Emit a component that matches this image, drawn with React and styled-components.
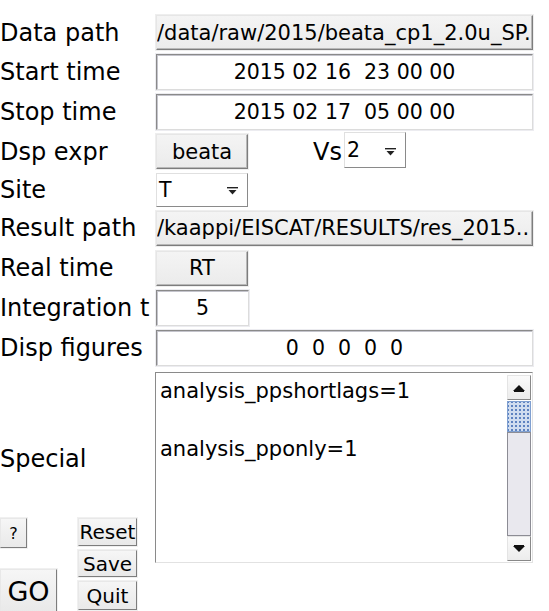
import React from "react";
import styled, { createGlobalStyle } from "styled-components";

const GlobalStyle = createGlobalStyle`
    html, body {
        margin: 0;
        padding: 0;
        background: #ffffff;
    }
    body {
        font-family: "DejaVu Sans", "Liberation Sans", sans-serif;
        color: #000;
    }
`;

const rows = [39, 40, 40, 39, 37, 40, 40, 40, 40];

export default function App() {
    return <>
        <GlobalStyle />
        <Window>
            <Form>
                <Label>Data path</Label>
                <Field><RaisedBox $width={377} $align="left">/data/raw/2015/beata_cp1_2.0u_SP.</RaisedBox></Field>

                <Label>Start time</Label>
                <Field><Entry $width={377}>2015 02 16&nbsp;&nbsp;23 00 00</Entry></Field>

                <Label>Stop time</Label>
                <Field><Entry $width={377}>2015 02 17&nbsp;&nbsp;05 00 00</Entry></Field>

                <Label>Dsp expr</Label>
                <Field>
                    <RaisedBox $width={92}>beata</RaisedBox>
                    <InlineLabel>Vs</InlineLabel>
                    <OptionMenu $width={62} $tall>2<MenuArrow /></OptionMenu>
                </Field>

                <Label>Site</Label>
                <Field><OptionMenu $width={92}>T<MenuArrow /></OptionMenu></Field>

                <Label>Result path</Label>
                <Field><RaisedBox $width={377} $align="left">/kaappi/EISCAT/RESULTS/res_2015..</RaisedBox></Field>

                <Label>Real time</Label>
                <Field><RaisedBox $width={92}>RT</RaisedBox></Field>

                <Label>Integration t</Label>
                <Field><Entry $width={93}>5</Entry></Field>

                <Label>Disp figures</Label>
                <Field><Entry $width={377}>0&nbsp;&nbsp;0&nbsp;&nbsp;0&nbsp;&nbsp;0&nbsp;&nbsp;0</Entry></Field>
            </Form>

            <Bottom>
                <LeftColumn>
                    <SpecialLabel>Special</SpecialLabel>
                    <Cluster>
                        <ClusterCol>
                            <SmallButton $w={27} $h={30} $size={16}>?</SmallButton>
                            <SmallButton $w={57} $h={44} $size={27}>GO</SmallButton>
                        </ClusterCol>
                        <ClusterCol $gap={4}>
                            <SmallButton $w={59} $h={28} $size={20}>Reset</SmallButton>
                            <SmallButton $w={59} $h={27} $size={20}>Save</SmallButton>
                            <SmallButton $w={59} $h={29} $size={20}>Quit</SmallButton>
                        </ClusterCol>
                    </Cluster>
                </LeftColumn>
                <TextPane>
                    <TextBody>{"analysis_ppshortlags=1\n\nanalysis_pponly=1"}</TextBody>
                    <ScrollBar>
                        <ArrowButton><Tri $up /></ArrowButton>
                        <Thumb />
                        <Trough />
                        <ArrowButton><Tri /></ArrowButton>
                    </ScrollBar>
                </TextPane>
            </Bottom>
        </Window>
    </>;
}

function MenuArrow() {
    return (
        <ArrowIcon width="11" height="8" viewBox="0 0 11 8">
            <rect x="0" y="0" width="11" height="1.4" fill="#222" />
            <path d="M1.5 3 L9.5 3 L5.5 7.5 Z" fill="#222" />
        </ArrowIcon>
    );
}

const Window = styled.div`
    width: 549px;
    height: 611px;
    overflow: hidden;
    padding-top: 13px;
    box-sizing: border-box;
`;

const Form = styled.div`
    display: grid;
    grid-template-columns: 155px 1fr;
    grid-template-rows: ${rows.map(r => `${r}px`).join(" ")};
`;

const Label = styled.div`
    font-size: 24px;
    line-height: 28px;
    align-self: center;
    white-space: nowrap;
    overflow: hidden;
`;

const Field = styled.div`
    display: flex;
    align-items: center;
    padding-left: 1px;
`;

const RaisedBox = styled.div`
    width: ${p => p.$width}px;
    height: 35px;
    box-sizing: border-box;
    background: linear-gradient(#f4f4f4, #ebebeb);
    border: 1px solid;
    border-color: #e6e6e6 #7d7d7d #7d7d7d #e6e6e6;
    box-shadow: inset -1px -1px 0 #b8b8b8, 0 0 0 1px #eeeeee;
    font-size: 21px;
    display: flex;
    align-items: center;
    justify-content: ${p => p.$align === "left" ? "flex-start" : "center"};
    white-space: nowrap;
    overflow: hidden;
`;

const Entry = styled.div`
    width: ${p => p.$width}px;
    height: 36px;
    box-sizing: border-box;
    background: #ffffff;
    border: 1px solid;
    border-color: #8a8a8a #dcdcdc #dcdcdc #8a8a8a;
    box-shadow: inset 1px 1px 0 #c4c4cc, 0 0 0 1px #ececf0;
    font-size: 20.5px;
    display: flex;
    align-items: center;
    justify-content: center;
    white-space: nowrap;
`;

const InlineLabel = styled.span`
    font-size: 24px;
    margin-left: 65px;
    margin-right: 2px;
`;

const OptionMenu = styled.div`
    width: ${p => p.$width}px;
    height: ${p => p.$tall ? 36 : 34}px;
    margin-top: ${p => p.$tall ? -3 : 0}px;
    box-sizing: border-box;
    background: #ffffff;
    border: 1px solid;
    border-color: #e0e0e0 #8a8a8a #8a8a8a #e0e0e0;
    font-size: 20.5px;
    display: flex;
    align-items: center;
    justify-content: space-between;
    padding: 0 9px 0 2px;
`;

const ArrowIcon = styled.svg`
    display: block;
    margin-top: 3px;
`;

const Bottom = styled.div`
    display: flex;
    align-items: flex-start;
    padding-top: 4px;
`;

const LeftColumn = styled.div`
    width: 155px;
    display: flex;
    flex-direction: column;
`;

const SpecialLabel = styled.div`
    font-size: 24px;
    line-height: 30px;
    margin-top: 72px;
`;

const Cluster = styled.div`
    margin-top: 44px;
    display: flex;
    align-items: flex-start;
    height: 95px;
`;

const ClusterCol = styled.div`
    width: ${p => p.$gap ? "60px" : "78px"};
    height: 100%;
    display: flex;
    flex-direction: column;
    justify-content: ${p => p.$gap ? "flex-start" : "space-between"};
    gap: ${p => p.$gap || 0}px;
`;

const SmallButton = styled.div`
    width: ${p => p.$w}px;
    height: ${p => p.$h}px;
    box-sizing: border-box;
    background: linear-gradient(#f6f6f6, #e9e9e9);
    border: 1px solid;
    border-color: #e8e8e8 #7d7d7d #7d7d7d #e8e8e8;
    box-shadow: 0 0 0 1px #f0f0f0;
    font-size: ${p => p.$size}px;
    display: flex;
    align-items: center;
    justify-content: center;
    white-space: nowrap;
    overflow: visible;
`;

const TextPane = styled.div`
    width: 378px;
    height: 191px;
    box-sizing: border-box;
    border: 1px solid;
    border-color: #8a8a8a #e2e2e2 #e2e2e2 #8a8a8a;
    background: #ffffff;
    display: flex;
`;

const TextBody = styled.div`
    flex: 1;
    font-size: 21px;
    line-height: 29px;
    white-space: pre;
    padding: 4px 0 0 4px;
    overflow: hidden;
`;

const ScrollBar = styled.div`
    width: 24px;
    margin: 2px 1px 1px 0;
    display: flex;
    flex-direction: column;
`;

const ArrowButton = styled.div`
    height: 25px;
    box-sizing: border-box;
    background: linear-gradient(#fafafa, #ececec);
    border: 1px solid;
    border-color: #e4e4e4 #888 #888 #e4e4e4;
    display: flex;
    align-items: center;
    justify-content: center;
`;

const Tri = styled.div`
    width: 0;
    height: 0;
    border-left: 6px solid transparent;
    border-right: 6px solid transparent;
    ${p => p.$up
        ? "border-bottom: 6px solid #111; box-shadow: 0 2px 0 -1px #111;"
        : "border-top: 6px solid #111; box-shadow: 0 -2px 0 -1px #111;"}
`;

const Thumb = styled.div`
    height: 31px;
    box-sizing: border-box;
    border: 1px solid #7f9fd0;
    background-color: #cfdcef;
    background-image: radial-gradient(#5d82c0 0.8px, transparent 1px);
    background-size: 4px 4px;
    background-position: 2px 2px;
    margin-top: 1px;
`;

const Trough = styled.div`
    flex: 1;
    box-sizing: border-box;
    border: 1px solid #8c8c94;
    background: #e9e8ee;
`;
